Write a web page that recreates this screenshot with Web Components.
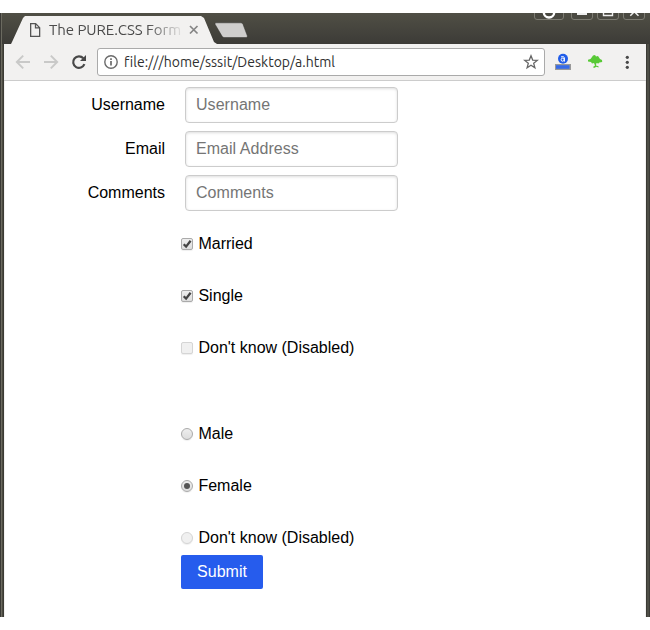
<!DOCTYPE html>
<html lang="en">
<head>
<meta charset="utf-8">
<title>The PURE.CSS Form</title>
<style>
html,body{margin:0;background:#fff}
body{width:650px;height:630px;overflow:hidden;font:16px "Liberation Sans",Arial,sans-serif;color:#000}
</style>
</head>
<body>
<app-window>
  <tab-strip slot="tabs"><browser-tab>The PURE.CSS Form</browser-tab></tab-strip>
  <tool-bar slot="tools">file:///home/sssit/Desktop/a.html</tool-bar>
  <aligned-form>
    <form-field placeholder="Username">Username</form-field>
    <form-field placeholder="Email Address">Email</form-field>
    <form-field placeholder="Comments">Comments</form-field>
    <choice-group slot="choices">
      <choice-item type="checkbox" checked>Married</choice-item>
      <choice-item type="checkbox" checked>Single</choice-item>
      <choice-item type="checkbox" disabled>Don't know (Disabled)</choice-item>
    </choice-group>
    <choice-group slot="choices">
      <choice-item type="radio">Male</choice-item>
      <choice-item type="radio" checked>Female</choice-item>
      <choice-item type="radio" disabled>Don't know (Disabled)</choice-item>
    </choice-group>
    <submit-button slot="choices">Submit</submit-button>
  </aligned-form>
</app-window>
<script>
function define(name, render) {
  customElements.define(name, class extends HTMLElement {
    connectedCallback() {
      if (this.shadowRoot) return;
      this.attachShadow({mode: 'open'}).innerHTML = render(this);
    }
  });
}

define('app-window', () => `<style>
:host{display:flex;flex-direction:column;box-sizing:border-box;width:650px;height:604px;margin-top:13px;background:linear-gradient(#504f45,#3c3b37 31px)}
.row{display:flex;flex:1;min-height:0}
.l{width:4px;flex:none;background:linear-gradient(90deg,#3a3935 0 1px,#6b6a60 1px 2px,#4b4a41 2px 3px,#3b3a34 3px)}
.r{width:4px;flex:none;background:linear-gradient(90deg,#3b3a35 0 1px,#4e4e46 1px 3px,#3c3b37 3px)}
main{flex:1;background:#fff;box-sizing:border-box;border-left:1px solid #f2f1f0;border-right:1px solid #f2f1f0}
</style><slot name="tabs"></slot>
<div class="row"><div class="l"></div><main><slot name="tools"></slot><slot></slot></main><div class="r"></div></div>`);

define('tab-strip', () => `<style>
:host{display:flex;height:31px;flex:none;background:linear-gradient(90deg,#3a3935 0 1px,#6b6a60 1px 2px,transparent 2px);padding-left:11px}
.new{flex:none;margin:9px 0 0 -4px}
.ctl{margin-left:auto;flex:none}
</style><slot></slot>
<svg class="new" width="36" height="17"><path d="M3 .8h25q1.400 0 2 1.500l4.300 11.500q.5 1.700-1 1.700H11q-1.500 0-2-1.400L2 2.200Q1.500 .8 3 .8z" fill="#cfcecd" stroke="#33322f" stroke-width=".5"/></svg>
<svg class="ctl" width="116" height="31" fill="none"><g stroke="#7d7c73" fill="#4a4941"><path d="M.5-2V4q0 2.500 2.500 2.500h24q2.500 0 2.500-2.500V-2M37.500 -2V4q0 2.500 2.500 2.500h16q2.500 0 2.500-2.500V-2M63.500 -2V4q0 2.500 2.500 2.500h16q2.500 0 2.500-2.500V-2M89.500 -2V4q0 2.500 2.500 2.500h16q2.500 0 2.500-2.500V-2"/></g><circle cx="15" cy="-.7" r="5.200" stroke="#fff" stroke-width="2.400"/><path d="M43 1h10" stroke="#eee" stroke-width="2"/><path d="M69.500-2v4.500h9V-2" stroke="#eee" stroke-width="1.400"/><path d="M96.300 2.700l4-4 4.200 4" stroke="#eee" stroke-width="1.500"/></svg>`);

define('browser-tab', () => `<style>
:host{display:flex;align-items:center;box-sizing:border-box;width:206px;height:31px;padding:3px 0 0 18px;background:#f2f1f0;clip-path:polygon(0 100%,1px 29px,12px 5px,14px 3px,190px 3px,193px 5px,203px 29px,206px 100%)}
.t{width:132px;margin-left:8px;overflow:hidden;white-space:nowrap;font:15px/20px Ubuntu,"Noto Sans",sans-serif;letter-spacing:-.05px;color:#4b4b4b;-webkit-mask-image:linear-gradient(90deg,#000 98px,transparent 136px)}
svg{flex:none}
.x{margin-left:7px}
</style><svg width="12" height="16" fill="none" stroke="#555" stroke-width="1.300"><path d="M1.650 1.650h5l4 4v8.700h-9zM6.500 1.700v4.200h4"/></svg><div class="t"><slot></slot></div>
<svg class="x" width="12" height="12" stroke="#858585" stroke-width="1.700"><path d="M2 2l7.500 7.500M9.500 2L2 9.500"/></svg>`);

define('tool-bar', () => `<style>
:host{display:flex;align-items:center;box-sizing:border-box;height:37px;background:#f2f1f0;border-bottom:1px solid #ccc;padding-left:10px;margin:0 -1px}
svg{flex:none}
.bar{box-sizing:border-box;margin-left:8px;width:448px;height:28px;border:1px solid #aaa;border-radius:3px;background:#fff;display:flex;align-items:center;padding:0 5px}
.u{flex:1;margin-left:6px;white-space:nowrap;font:14px/20px Ubuntu,"Noto Sans",sans-serif;letter-spacing:.02px;color:#303030}
</style>
<svg width="75" height="20" fill="none" stroke="#c9c9c8" stroke-width="1.900"><path d="M16 10H3M9.200 3.600L2.800 10l6.400 6.400M30 10h13M36.800 3.600l6.400 6.400-6.400 6.400"/><path d="M69.300 6.200A5.800 5.800 0 1 0 70.400 12.200" stroke="#484848" stroke-width="2.200"/><path d="M72 3v6h-6z" fill="#484848" stroke="none"/></svg>
<div class="bar"><svg width="15" height="16" fill="none" stroke="#6b6b6b" stroke-width="1.400"><circle cx="8" cy="8" r="6.200"/><path d="M8 7v4.500M8 4.200v1.700" stroke-width="1.700"/></svg>
<div class="u"><slot></slot></div>
<svg width="16" height="16" fill="none" stroke="#666" stroke-width="1.300"><path d="M8 1.800l1.700 4.300 4.600.3-3.600 2.900 1.200 4.500L8 11.300l-3.900 2.500 1.200-4.500L1.700 6.400l4.600-.3z"/></svg></div>
<svg style="margin-left:10px" width="18" height="20"><circle cx="8" cy="6.800" r="5" fill="#215de9"/><circle cx="7.600" cy="7.700" r="1.500" fill="none" stroke="#fff"/><path d="M6 4.900q3.400-1 3.400 1.100V9.600" fill="none" stroke="#fff"/><path d="M0 12h16v6H0z" fill="#999"/><path d="M1 13.200h13.500v3.600H1z" fill="#376be8"/></svg>
<svg style="margin-left:14px" width="18" height="20" fill="#58c936"><path d="M5 5l1-1.500 2-.5 1 1.500 2-.5 1 1.500 1 1.500 2 1 .2 2-2.800.5-1 1-2-.4-.4 2.300 2.500.8v1.200l-2-.6-2.500 1.200-1-1 2-1.500L7 11l-2 .5-1-1.500-3-.5V7.800L3.500 7z"/></svg>
<svg style="margin-left:19px" width="6" height="20" fill="#484848"><circle cx="3.300" cy="5.300" r="1.600"/><circle cx="3.300" cy="10.300" r="1.600"/><circle cx="3.300" cy="15.300" r="1.600"/></svg>`);

define('aligned-form', () => `<style>
:host{display:block;padding:6px 0 0}
.fields{display:grid;gap:8px}
.choices{display:flex;flex-direction:column;align-items:flex-start;margin:20px 0 0 176px}
</style><div class="fields"><slot></slot></div><div class="choices"><slot name="choices"></slot></div>`);

define('form-field', el => `<style>
:host{display:grid;grid-template-columns:160px 213px;column-gap:20px;align-items:center;height:36px}
label{text-align:right}
input{box-sizing:border-box;width:213px;height:36px;margin:0;padding:0 10px;border:1px solid #ccc;border-radius:4px;box-shadow:inset 0 1px 3px #ddd;font:inherit;letter-spacing:.04px;background:#fff}
input::placeholder{color:#757575}
</style><label><slot></slot></label><input type="text" placeholder="${el.getAttribute('placeholder')}">`);

define('choice-group', () => `<style>
:host{display:flex;flex-direction:column;gap:26px;margin-bottom:60px}
:host(:nth-of-type(2)){margin-bottom:4px}
</style><slot></slot>`);

define('choice-item', el => {
  const radio = el.getAttribute('type') === 'radio';
  const on = el.hasAttribute('checked');
  const mark = !on ? '' : radio ? '<circle cx="6" cy="6" r="3" fill="#555"/>'
    : '<path d="M2.700 6.200l2.400 2.400L9.600 2.800" fill="none" stroke="#444" stroke-width="2.300"/>';
  return `<style>
:host{display:flex;align-items:center;height:26px;white-space:nowrap}
.c{box-sizing:border-box;width:12px;height:12px;border:1px solid #aaa;border-radius:${radio ? '50%' : '2px'};background:linear-gradient(#eee,#ddd);box-shadow:0 1px 1px #0001;margin:0 5.450px 1px 0;flex:none}
:host([disabled]) .c{border-color:#d5d5d5;background:#f0f0f0}
svg{display:block;margin:-1px;overflow:visible}
</style><span class="c"><svg width="12" height="12">${mark}</svg></span><span><slot></slot></span>`;
});

define('submit-button', () => `<style>
:host{display:block}
button{display:block;box-sizing:border-box;width:82px;height:34px;border:0;border-radius:2px;padding:0;background:#265ced;color:#fff;font:inherit;font-size:16px}
</style><button type="button"><slot></slot></button>`);
</script>
</body>
</html>
